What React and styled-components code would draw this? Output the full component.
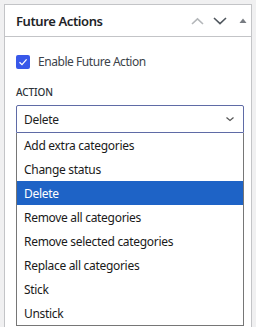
import React, { useState } from 'react';
import styled, { createGlobalStyle } from 'styled-components';

const GlobalStyle = createGlobalStyle`
  html, body {
    margin: 0;
    padding: 0;
    background: #f0f0f1;
    font-family: 'Noto Sans', 'Open Sans', sans-serif;
    overflow: hidden;
  }
`;

const Page = styled.div`
  padding: 4px 0 0 4px;
  height: 327px;
  box-sizing: border-box;
`;

const Panel = styled.div`
  width: 248px;
  height: 323px;
  box-sizing: border-box;
  background: #fff;
  border: 1px solid #c3c4c7;
  border-bottom: none;
`;

const Header = styled.div`
  display: flex;
  align-items: center;
  height: 31px;
  padding: 0 3px 0 11px;
  border-bottom: 1px solid #c3c4c7;
`;

const Title = styled.h2`
  flex: 1;
  margin: 0;
  font-size: 13px;
  font-weight: 600;
  color: #1d2327;
  letter-spacing: -0.4px;
  padding-top: 1px;
`;

const Controls = styled.div`
  display: flex;
  align-items: center;
`;

const Body = styled.div`
  padding: 16px 7px 0 11px;
`;

const CheckRow = styled.label`
  display: flex;
  align-items: center;
  gap: 8px;
  font-size: 12px;
  letter-spacing: -0.45px;
  color: #3c434a;
`;

const Box = styled.span`
  display: flex;
  align-items: center;
  justify-content: center;
  width: 14px;
  height: 14px;
  border-radius: 2px;
  background: #3858e9;
`;

const FieldLabel = styled.div`
  margin-top: 16px;
  font-size: 10px;
  font-weight: 500;
  color: #2c3338;
  letter-spacing: -0.1px;
  line-height: 13px;
`;

const Wrap = styled.div`
  position: relative;
  margin-top: 6px;
`;

const Select = styled.div`
  display: flex;
  align-items: center;
  justify-content: space-between;
  width: 228px;
  height: 28px;
  box-sizing: border-box;
  padding: 0 8px 0 7px;
  border: 1px solid #5f6ba6;
  border-radius: 2px 2px 0 0;
  font-size: 12px;
  letter-spacing: -0.3px;
  color: #1e1e1e;
`;

const Menu = styled.ul`
  position: absolute;
  left: 0;
  top: 100%;
  width: 228px;
  box-sizing: border-box;
  margin: 0;
  padding: 0;
  list-style: none;
  background: #fff;
  border: 1px solid #767676;
  border-top: none;
`;

const Option = styled.li`
  height: 24px;
  display: flex;
  align-items: center;
  padding-left: 7px;
  font-size: 12px;
  letter-spacing: -0.3px;
  color: ${(p) => (p.$active ? '#fff' : '#1a1a1a')};
  background: ${(p) => (p.$active ? '#1e63c6' : 'transparent')};
  cursor: default;
`;

const options = [
  'Add extra categories',
  'Change status',
  'Delete',
  'Remove all categories',
  'Remove selected categories',
  'Replace all categories',
  'Stick',
  'Unstick',
];

const App = () => {
  const [value, setValue] = useState('Delete');

  return (
    <Page>
      <GlobalStyle />
      <Panel>
        <Header>
          <Title>Future Actions</Title>
          <Controls>
            <svg width="13" height="8" viewBox="0 0 13 8">
              <path d="M1 7 L6.5 1.8 L12 7" fill="none" stroke="#b4b7ba" strokeWidth="1.6" />
            </svg>
            <svg width="14" height="8" viewBox="0 0 14 8" style={{ marginLeft: 9 }}>
              <path d="M1 1 L7 6.6 L13 1" fill="none" stroke="#50575e" strokeWidth="1.6" />
            </svg>
            <svg width="10" height="8" viewBox="0 0 10 8" style={{ marginLeft: 11 }}>
              <path d="M1.5 6 L5 1.6 L8.5 6 Z" fill="#787c82" />
            </svg>
          </Controls>
        </Header>
        <Body>
          <CheckRow>
            <Box>
              <svg width="12" height="12" viewBox="0 0 12 12">
                <path d="M2.5 6.2 L5 8.6 L9.6 3.4" fill="none" stroke="#fff" strokeWidth="1.3" />
              </svg>
            </Box>
            Enable Future Action
          </CheckRow>
          <FieldLabel>ACTION</FieldLabel>
          <Wrap>
            <Select>
              {value}
              <svg width="10" height="6" viewBox="0 0 10 6">
                <path d="M1.5 1.5 L5 4.5 L8.5 1.5" fill="none" stroke="#555" strokeWidth="1.2" />
              </svg>
            </Select>
            <Menu>
              {options.map((o) => (
                <Option key={o} $active={o === value} onClick={() => setValue(o)}>
                  {o}
                </Option>
              ))}
            </Menu>
          </Wrap>
        </Body>
      </Panel>
    </Page>
  );
};

export default App;
